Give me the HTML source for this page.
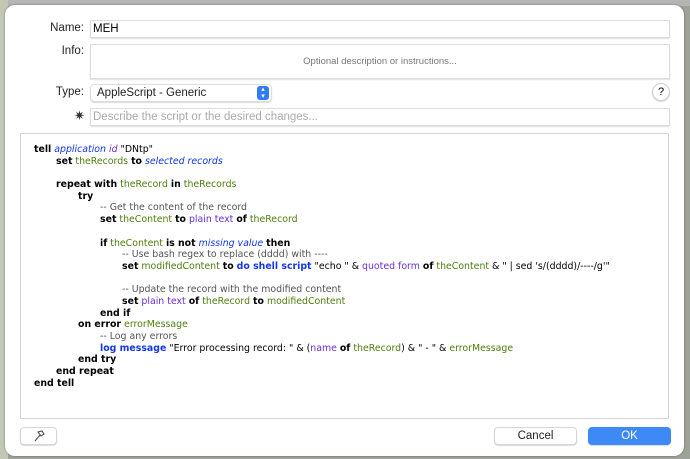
<!DOCTYPE html>
<html><head><style>
html,body{margin:0;width:690px;height:459px;overflow:hidden}
body{background:#9ea39a;font-family:"Liberation Sans",sans-serif;position:relative}
.bgl{position:absolute;left:0;top:0;width:8px;height:459px;background:#c3c8b4}
.bgt{position:absolute;left:0;top:0;width:690px;height:6px;background:#b5b5b5}
.dlg{position:absolute;left:5px;top:5px;width:679px;height:451px;background:#fff;border-radius:10px;box-shadow:0 0 2px rgba(0,0,0,.4)}
.lbl{position:absolute;font-size:11.5px;color:#222;text-align:right;width:80px;left:4px}
.fld{position:absolute;left:90px;width:578px;border:1px solid #ddd;box-shadow:0 1px 1px rgba(0,0,0,.12);background:#fff;font-size:11.5px}
.code{position:absolute;left:20px;top:133px;width:647px;height:284px;border:1px solid #d4d4d4;background:#fff;overflow:hidden}
.lines{position:absolute;left:13px;top:10px;font-family:"DejaVu Sans",sans-serif;font-size:9.4px;line-height:11.7px;color:#000}
.lines div{height:11.7px;white-space:pre}
b{font-weight:bold}
.g{color:#4e7f0e}.bl{color:#1236e8;font-style:italic}.p{color:#6a2fd8}.cm{color:#555}.k{color:#1236e8;font-weight:bold}
.btn{position:absolute;top:427px;height:16px;border:1px solid #d6d6d6;border-radius:4px;background:#fff;box-shadow:0 1px 1px rgba(0,0,0,.15);font-size:11.5px;text-align:center;line-height:16px;color:#222}
</style></head><body>
<div class="bgt"></div><div class="bgl"></div>
<div class="dlg"></div>
<div class="lbl" style="top:22px">Name:</div>
<div class="fld" style="top:20px;height:16px;line-height:16px;padding-left:2px;width:576px">MEH</div>
<div class="lbl" style="top:45px">Info:</div>
<div class="fld" style="top:44px;height:33px;line-height:33px;text-align:center;color:#777;font-size:9.5px">Optional description or instructions...</div>
<div class="lbl" style="top:86px">Type:</div>
<div style="position:absolute;left:90px;top:84px;width:180px;height:16px;border:1px solid #ddd;border-radius:4px;box-shadow:0 1px 1px rgba(0,0,0,.15);font-size:11.5px;line-height:16px;color:#222"><span style="margin-left:6px">AppleScript - Generic</span><div style="position:absolute;right:2px;top:1px;width:12px;height:14px;background:#2f7cf6;border-radius:3px;color:#fff;font-size:7px;line-height:7px;text-align:center">▴<br>▾</div></div>
<div style="position:absolute;left:652px;top:83px;width:16px;height:16px;border:1px solid #ccc;border-radius:50%;text-align:center;font-size:11px;line-height:16px;box-shadow:0 1px 1px rgba(0,0,0,.15)">?</div>
<div style="position:absolute;left:74px;top:108px;font-size:13px;color:#333">✷</div>
<div class="fld" style="top:108px;height:16px;line-height:16px;color:#aaa;padding-left:2px;width:576px">Describe the script or the desired changes...</div>
<div class="code">
<div class="lines">
<div><b>tell</b> <span class="bl">application</span> <span class="p" style="font-style:italic">id</span> "DNtp"</div>
<div style="padding-left:22px"><b>set</b> <span class="g">theRecords</span> <b>to</b> <span class="bl">selected records</span></div>
<div></div>
<div style="padding-left:22px"><b>repeat with</b> <span class="g">theRecord</span> <b>in</b> <span class="g">theRecords</span></div>
<div style="padding-left:44px"><b>try</b></div>
<div class="cm" style="padding-left:66px">-- Get the content of the record</div>
<div style="padding-left:66px"><b>set</b> <span class="g">theContent</span> <b>to</b> <span class="p">plain text</span> <b>of</b> <span class="g">theRecord</span></div>
<div></div>
<div style="padding-left:66px"><b>if</b> <span class="g">theContent</span> <b>is not</b> <span class="bl">missing value</span> <b>then</b></div>
<div class="cm" style="padding-left:88px">-- Use bash regex to replace (dddd) with ----</div>
<div style="padding-left:88px"><b>set</b> <span class="g">modifiedContent</span> <b>to</b> <span class="k">do shell script</span> "echo " &amp; <span class="p">quoted form</span> <b>of</b> <span class="g">theContent</span> &amp; " | sed 's/(dddd)/----/g'"</div>
<div></div>
<div class="cm" style="padding-left:88px">-- Update the record with the modified content</div>
<div style="padding-left:88px"><b>set</b> <span class="p">plain text</span> <b>of</b> <span class="g">theRecord</span> <b>to</b> <span class="g">modifiedContent</span></div>
<div style="padding-left:66px"><b>end if</b></div>
<div style="padding-left:44px"><b>on error</b> <span class="g">errorMessage</span></div>
<div class="cm" style="padding-left:66px">-- Log any errors</div>
<div style="padding-left:66px"><span class="k">log message</span> "Error processing record: " &amp; (<span class="p">name</span> <b>of</b> <span class="g">theRecord</span>) &amp; " - " &amp; <span class="g">errorMessage</span></div>
<div style="padding-left:44px"><b>end try</b></div>
<div style="padding-left:22px"><b>end repeat</b></div>
<div><b>end tell</b></div>
</div></div>
<div class="btn" style="left:20px;width:35px"><svg width="14" height="14" viewBox="0 0 14 14" style="margin-top:1px"><path d="M3 12 L8 6 M6 3 L10 2 L12 5 L9 7 Z" stroke="#444" fill="none" stroke-width="1"/></svg></div>
<div class="btn" style="left:494px;width:81px">Cancel</div>
<div class="btn" style="left:588px;width:81px;background:#3d8af7;border-color:#3d8af7;color:#fff">OK</div>
</body></html>
